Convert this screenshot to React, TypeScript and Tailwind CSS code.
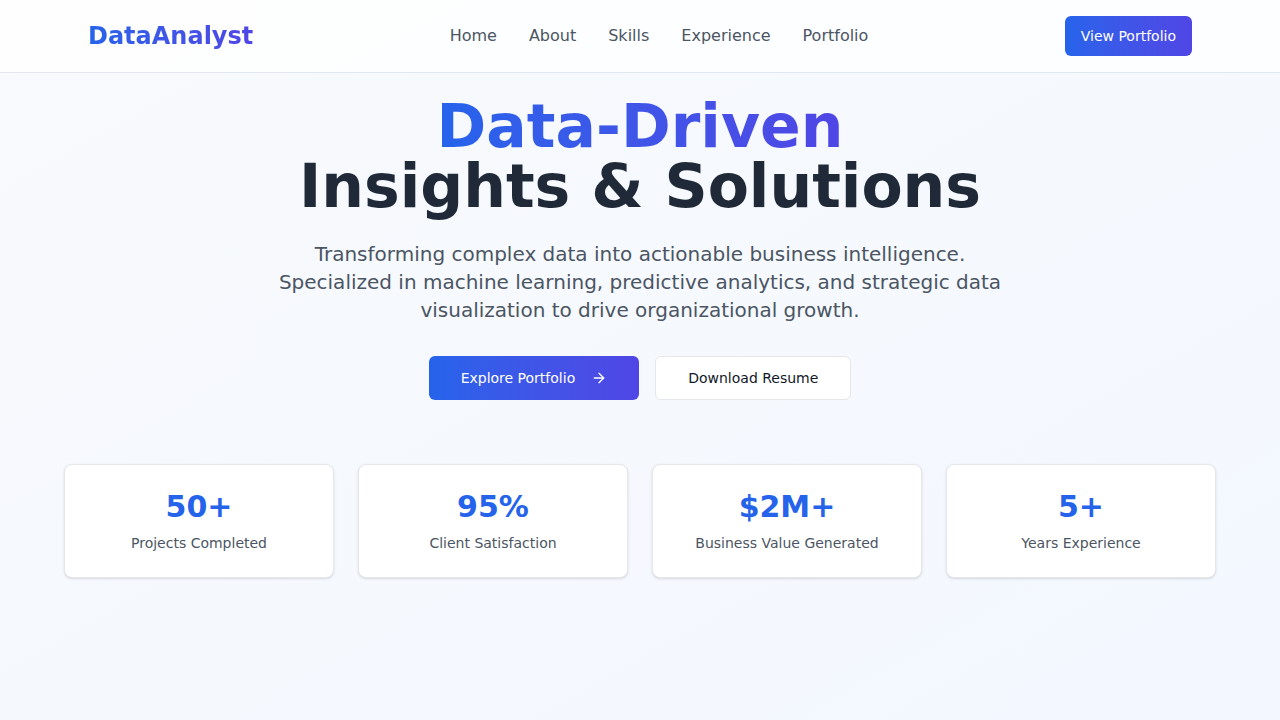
import { ArrowRight } from "lucide-react";

const links = ["Home", "About", "Skills", "Experience", "Portfolio"];

const stats = [
  { value: "50+", label: "Projects Completed" },
  { value: "95%", label: "Client Satisfaction" },
  { value: "$2M+", label: "Business Value Generated" },
  { value: "5+", label: "Years Experience" },
];

const App = () => {
  return (
    <div
      className="min-h-screen bg-gradient-to-br from-[#f8fafc] to-[#f3f7ff]"
      style={{ fontFamily: '"DejaVu Sans", sans-serif' }}
    >
      <nav className="bg-white/80 border-b border-[#e2e8f0]">
        <div className="max-w-6xl mx-auto px-6 h-[72px] flex items-center justify-between">
          <span className="text-2xl font-bold bg-gradient-to-r from-[#2563eb] to-[#4f46e5] bg-clip-text text-transparent">
            DataAnalyst
          </span>
          <div className="flex items-center gap-8">
            {links.map((link) => (
              <a key={link} href="#" className="text-base text-[#4b5563] hover:text-[#2563eb]">
                {link}
              </a>
            ))}
          </div>
          <button className="bg-gradient-to-r from-[#2563eb] to-[#4f46e5] text-white text-sm px-4 py-2.5 rounded-md">
            View Portfolio
          </button>
        </div>
      </nav>

      <section className="max-w-6xl mx-auto pt-[23px] pb-16 text-center">
        <h1 className="text-6xl font-bold leading-none mb-6">
          <span className="bg-gradient-to-r from-[#2563eb] to-[#4f46e5] bg-clip-text text-transparent">
            Data-Driven
          </span>
          <br />
          <span className="text-[#1f2937]">Insights &amp; Solutions</span>
        </h1>
        <p className="text-xl leading-7 text-[#4b5563] max-w-3xl mx-auto mb-8">
          Transforming complex data into actionable business intelligence. Specialized in machine
          learning, predictive analytics, and strategic data visualization to drive organizational
          growth.
        </p>
        <div className="flex justify-center gap-4">
          <button className="flex items-center bg-gradient-to-r from-[#2563eb] to-[#4f46e5] text-white text-sm px-8 py-3 rounded-md">
            Explore Portfolio
            <ArrowRight className="w-4 h-4 ml-4" />
          </button>
          <button className="bg-white border border-[#e5e7eb] text-[#111827] text-sm px-8 py-[11px] rounded-md">
            Download Resume
          </button>
        </div>

        <div className="grid grid-cols-4 gap-6 mt-16">
          {stats.map((stat) => (
            <div key={stat.label} className="bg-white border border-[#e5e7eb] rounded-lg shadow-sm p-6">
              <div className="text-3xl font-bold text-[#2563eb]">{stat.value}</div>
              <div className="text-sm text-[#4b5563] mt-2">{stat.label}</div>
            </div>
          ))}
        </div>
      </section>
    </div>
  );
};

export default App;
